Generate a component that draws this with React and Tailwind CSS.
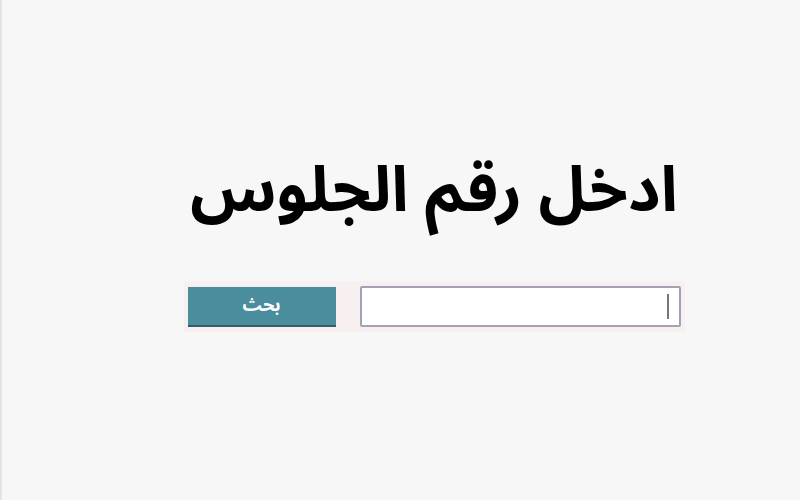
// صفحة البحث برقم الجلوس

function App() {
  return (
    <div
      dir="rtl"
      className="w-[800px] h-[500px] bg-[#f7f7f7] border-l-2 border-[#e4e4e4] flex flex-col items-center pt-[136px] pl-[66px]"
      style={{ fontFamily: '"Noto Sans Arabic", "DejaVu Sans", sans-serif' }}
    >
      <h1 className="text-[63px] leading-[110px] font-bold text-black">ادخل رقم الجلوس</h1>

      <div className="mt-[35px] flex items-center gap-[24px] bg-[#f7eff0] px-[4px] py-[5px]">
        <div className="relative w-[321px] h-[41px] bg-white border-2 border-[#a3a1b6] rounded-[2px]">
          <span className="absolute right-[10px] top-[6px] w-[2px] h-[25px] bg-[#777]"></span>
        </div>
        <button className="w-[148px] h-[40px] bg-[#4a8e9e] border-b-2 border-[#2f5f6a] text-white text-[18px] font-bold">
          بحث
        </button>
      </div>
    </div>
  )
}

export default App
